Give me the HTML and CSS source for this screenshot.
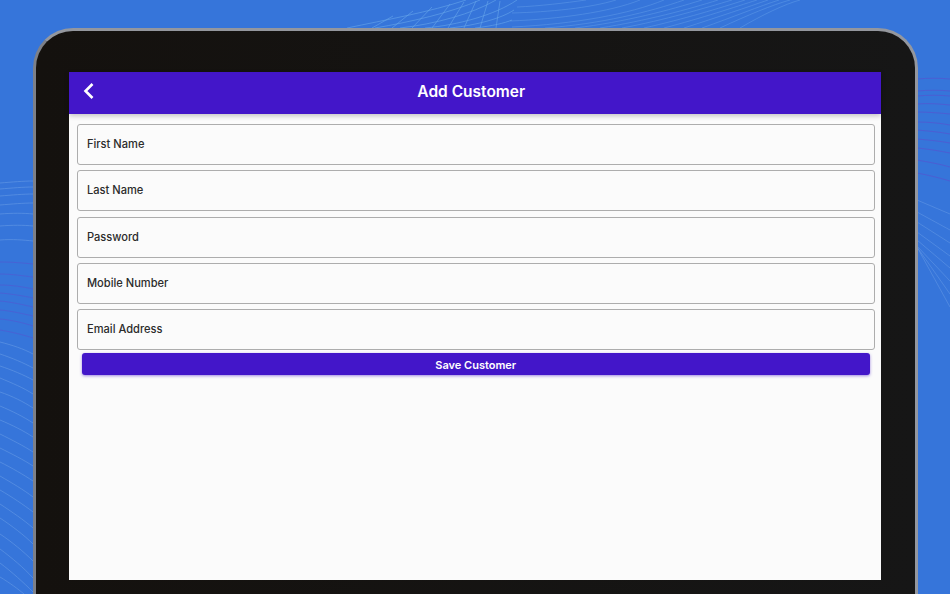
FILE: index.html
```html
<!DOCTYPE html>
<html>
<head>
  <title>Add Customer</title>
  <link rel="stylesheet" href="styles.css">
</head>
<body>
  <svg class="backdrop" width="950" height="594" viewBox="0 0 950 594" fill="none">
    <!-- top mesh -->
    <g stroke="#73b3f0" stroke-width=".6" opacity=".8">
      <path d="M347 28C385 20 430 12 466 0"/>
      <path d="M375 28C410 22 450 13 480 0"/>
      <path d="M400 28C435 24 472 14 496 0"/>
      <path d="M425 28C458 25 495 15 517 0"/>
      <path d="M450 28C478 25 502 18 514 10"/>
      <path d="M475 28C492 26 505 23 512 20"/>
      <path d="M372 28L393 16M392 28L413 11M412 28L432 7M432 28L450 4M448 28L464 2M464 28L476 1M480 28L488 1M496 28L500 1"/>
    </g>
    <g stroke="#6aa5ec" stroke-width=".7" opacity=".6">
      <path d="M517 7C540 6 565 3 586 0M512 13C550 12 590 8 616 0M510 21C560 19 610 12 640 0M512 27C575 24 630 14 664 0"/>
      <path d="M545 28C600 24 650 12 684 0M575 28C625 22 670 10 702 0M600 28C645 21 690 9 718 0M622 28C665 20 705 8 732 0M644 28C684 19 720 8 745 0M664 28C702 18 735 7 757 0M684 28C718 17 748 7 768 0M702 28C733 17 760 6 779 0M720 28C748 15 772 5 790 0M740 28C762 15 785 4 800 0"/>
    </g>
    <!-- left curves -->
    <g stroke="#8fbcf0" stroke-width=".7" opacity=".45">
      <path d="M0 183C12 182 24 181 33 181M0 189C12 188 24 187 33 187M0 196C12 195 24 194 33 194M0 205C12 204 24 203 33 203"/>
      <path d="M0 214C12 213 24 213 33 214M0 226C12 225 24 225 33 226M0 240C12 239 24 240 33 241"/>
      <path d="M0 342C12 345 24 349 33 354M0 354C12 358 24 363 33 368M0 366C12 370 24 375 33 380M0 378C12 383 24 388 33 394"/>
      <path d="M0 392C12 396 24 402 33 408M0 406C12 411 24 417 33 423M0 420C12 425 24 431 33 437M0 434C12 440 24 446 33 452"/>
      <path d="M0 448C12 454 24 460 33 466M0 462C12 468 24 475 33 481M0 476C12 483 24 490 33 497M0 490C12 497 24 505 33 512"/>
      <path d="M0 504C12 512 24 520 33 528M0 518C12 526 24 535 33 544M0 534C12 542 24 552 33 561M0 549C12 558 24 568 33 578M0 563C12 572 24 583 33 592M0 577C10 583 18 589 24 594"/>
    </g>
    <g stroke="#5a50d0" stroke-width=".9" opacity=".55">
      <path d="M0 262C12 262 24 263 33 264M0 274C12 274 24 276 33 277M0 285C12 285 24 287 33 289M0 293C12 294 24 296 33 298"/>
      <path d="M0 301C12 302 24 305 33 307M0 310C12 311 24 314 33 316M0 319C12 320 24 323 33 326M0 330C12 332 24 335 33 338"/>
    </g>
    <!-- right curves -->
    <g stroke="#5a50d0" stroke-width="1" opacity=".6">
      <path d="M917 79C928 78 940 78 950 79M917 91C928 90 940 90 950 91M917 96C928 95 940 95 950 96M917 104C928 103 940 104 950 105"/>
      <path d="M917 112C928 112 940 113 950 114M917 122C928 122 940 123 950 125M917 130C928 131 940 132 950 134M917 139C928 140 940 141 950 143"/>
      <path d="M917 148C928 149 940 151 950 153M917 160C928 162 940 164 950 167M917 173C928 175 940 178 950 181"/>
    </g>
    <g stroke="#8fbcf0" stroke-width=".7" opacity=".4">
      <path d="M917 200L950 214M917 212L950 230M917 222L950 243M917 232L950 256M917 240L950 268M917 246L950 281M917 247L950 294M917 247L950 307"/>
    </g>
  </svg>

  <div class="tablet">
    <div class="screen">
      <header class="appbar">
        <button class="back" aria-label="Back">
          <svg width="11" height="16" viewBox="0 0 11 16" fill="none" stroke="#fff" stroke-width="2.6">
            <path d="M9.5 1L2.5 8L9.5 15"/>
          </svg>
        </button>
        <h1>Add Customer</h1>
      </header>
      <form class="form">
        <div class="field">First Name</div>
        <div class="field">Last Name</div>
        <div class="field">Password</div>
        <div class="field">Mobile Number</div>
        <div class="field">Email Address</div>
        <button class="save" type="button">Save Customer</button>
      </form>
    </div>
  </div>
</body>
</html>
```

FILE: styles.css
```css
html, body {
  margin: 0;
  height: 594px;
  overflow: hidden;
}
body {
  position: relative;
  background: #3675da;
  font: 500 11.1px Inter, "Liberation Sans", sans-serif;
  color: #2b2b2b;
}
.backdrop {
  position: absolute;
  left: 0;
  top: 0;
}
.tablet {
  position: relative;
  box-sizing: border-box;
  width: 885px;
  height: 566px;
  margin: 0 0 0 33px;
  top: 28px;
  padding: 41px 33px 0 33px;
  background: linear-gradient(90deg, #14110e, #161616);
  border: 3px solid #94979e;
  border-left-color: #7d8088;
  border-bottom: none;
  border-radius: 40px 40px 0 0;
}
.screen {
  width: 812px;
  height: 508px;
  background: #fbfbfb;
}
.appbar {
  position: relative;
  display: flex;
  align-items: center;
  box-sizing: border-box;
  height: 41.5px;
  padding: 0 0 3px 13.5px;
  background: #4316c9;
  color: #fff;
  box-shadow: 0 2px 5px rgba(0, 0, 0, .22);
}
.appbar h1 {
  flex: 1;
  margin: 0 32px 0 0;
  font-size: 15.5px;
  font-weight: 600;
  text-align: center;
}
.back {
  display: flex;
  width: 11px;
  padding: 0;
  border: none;
  background: none;
}
.form {
  display: flex;
  flex-direction: column;
  gap: 5.25px;
  padding: 10.5px 6.5px 0 8px;
}
.field {
  box-sizing: border-box;
  display: flex;
  align-items: center;
  height: 41px;
  padding: 0 0 1px 9px;
  border: 1.2px solid #adadad;
  border-radius: 3px;
}
.save {
  height: 22px;
  margin: -2px 4.5px 0 4.5px;
  padding: 1px 0 0;
  border: none;
  border-radius: 3px;
  background: #4316c9;
  color: #fff;
  font: 600 11px Inter, "Liberation Sans", sans-serif;
  box-shadow: 0 1px 3px rgba(67, 22, 201, .5);
}
```
